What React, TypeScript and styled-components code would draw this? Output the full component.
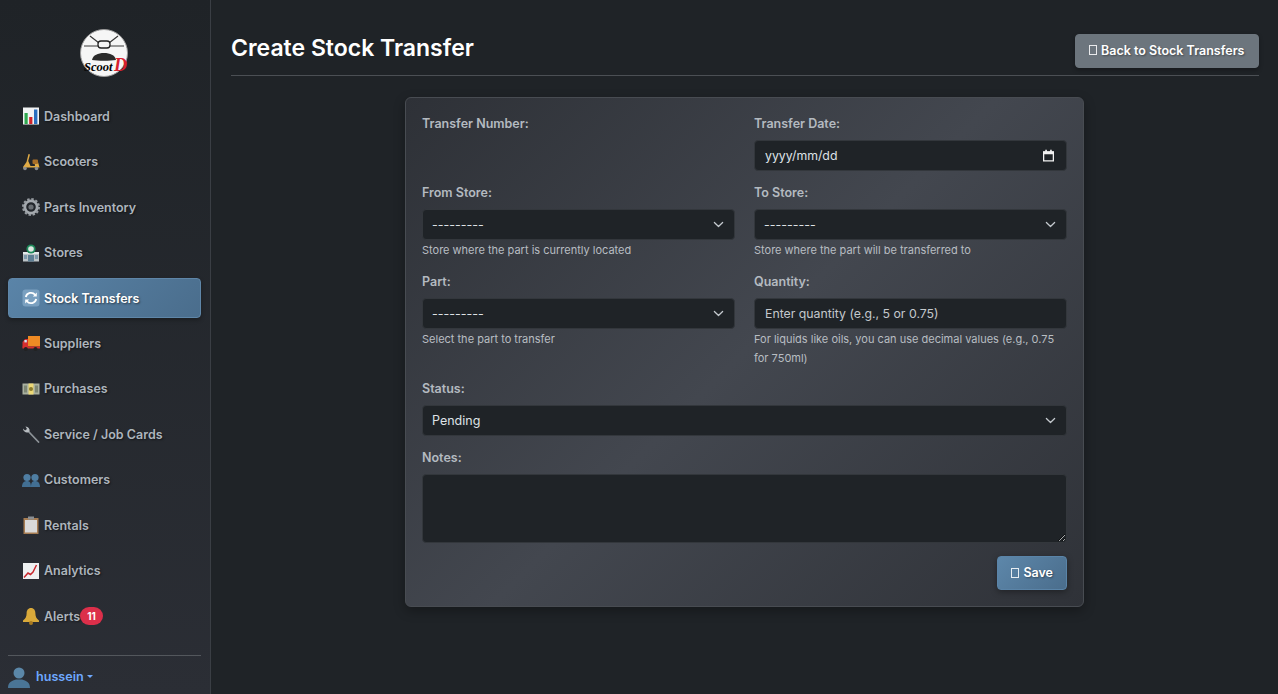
import React from 'react';
import styled, { createGlobalStyle } from 'styled-components';

const chevron = `url("data:image/svg+xml,%3csvg xmlns='http://www.w3.org/2000/svg' viewBox='0 0 16 16'%3e%3cpath fill='none' stroke='%23c4c9ce' stroke-linecap='round' stroke-linejoin='round' stroke-width='1.8' d='m2 5 6 6 6-6'/%3e%3c/svg%3e")`;
const calendar = `url("data:image/svg+xml,%3csvg xmlns='http://www.w3.org/2000/svg' viewBox='0 0 16 16'%3e%3cpath fill='none' stroke='%23f2f2f2' stroke-width='1.6' d='M2 3.5h12v11H2z'/%3e%3cpath fill='%23f2f2f2' d='M1.5 3h13v3.5h-13zM4 1h2v2.5H4zM10 1h2v2.5h-2z'/%3e%3c/svg%3e")`;

const GlobalStyle = createGlobalStyle`
    html, body {
        margin: 0;
        height: 100%;
        overflow: hidden;
        background: #1f2327;
        font-family: Inter, 'Noto Sans', sans-serif;
    }
    * {
        box-sizing: border-box;
    }
`;

const BarsIcon = () => (
    <svg viewBox="0 0 18 18" width="18" height="18">
        <rect x="1" y="0.5" width="16" height="17" fill="#f1f3f4" />
        <rect x="2.5" y="6" width="3.2" height="11" fill="#2fa84f" />
        <rect x="7.2" y="10" width="3.2" height="7" fill="#d0242b" />
        <rect x="12" y="2.5" width="3.4" height="14.5" fill="#2a6fc0" />
    </svg>
);

const ScooterIcon = () => (
    <svg viewBox="0 0 18 18" width="18" height="18">
        <path d="M6.5 1 8 1.500 6.200 8 8.500 13H13l-.5-3.500 3.500-.5 1.500 5.500H4.500L2 16l-1-2 3.500-5z" fill="#e0ab45" />
        <rect x="10.500" y="6.500" width="5.500" height="4.500" rx="1" fill="#a86f28" />
        <circle cx="3" cy="15.500" r="1.800" fill="#8a8d90" />
        <circle cx="14.500" cy="15.500" r="1.800" fill="#8a8d90" />
    </svg>
);

const GearIcon = () => (
    <svg viewBox="0 0 18 18" width="18" height="18">
        <circle cx="9" cy="9" r="6.200" fill="none" stroke="#a4a9ae" strokeWidth="2.800" />
        <circle cx="9" cy="9" r="8" fill="none" stroke="#979ca1" strokeWidth="2" strokeDasharray="2.400 1.800" />
        <circle cx="9" cy="9" r="2.600" fill="#6a6f74" />
    </svg>
);

const StoreIcon = () => (
    <svg viewBox="0 0 18 18" width="18" height="18">
        <rect x="1" y="8" width="16" height="9.500" fill="#bcc3c7" />
        <rect x="1" y="8" width="16" height="2" fill="#e4e8ea" />
        <rect x="6" y="11" width="6" height="6.500" fill="#5e7f94" />
        <rect x="2" y="11" width="3" height="4" fill="#7f9aab" />
        <rect x="13" y="11" width="3" height="4" fill="#7f9aab" />
        <circle cx="9" cy="5" r="4.600" fill="#1f8a5b" />
        <circle cx="9" cy="5" r="2.800" fill="#dfe7e3" />
    </svg>
);

const SyncIcon = () => (
    <svg viewBox="0 0 18 18" width="18" height="18">
        <rect x="0.500" y="0.500" width="17" height="17" rx="3" fill="#7aa0c0" />
        <path d="M3.800 8a5.300 5.300 0 0 1 9.300-2.200M14.200 10a5.300 5.300 0 0 1-9.300 2.200" fill="none" stroke="#fff" strokeWidth="1.800" />
        <path d="M14.800 3.400v4h-4zM3.200 14.600v-4h4z" fill="#fff" />
    </svg>
);

const TruckIcon = () => (
    <svg viewBox="0 0 18 18" width="18" height="18">
        <rect x="6" y="2" width="12" height="10.500" fill="#ee8a24" />
        <path d="M0.500 8 3 5h3v8.500H0.500z" fill="#d62f2f" />
        <rect x="0.500" y="12.500" width="17.500" height="2" fill="#d62f2f" />
        <rect x="2.400" y="6" width="2.400" height="2.400" fill="#cfe6f5" />
        <circle cx="3.800" cy="15" r="2" fill="#222" />
        <circle cx="13.500" cy="15" r="2" fill="#222" />
    </svg>
);

const MoneyIcon = () => (
    <svg viewBox="0 0 18 18" width="18" height="18">
        <rect x="0.500" y="3.500" width="17" height="11" fill="#a9b09f" />
        <rect x="6.500" y="3.500" width="5" height="11" fill="#ecd876" />
        <circle cx="9" cy="9" r="2" fill="#8a7a2c" />
        <rect x="2" y="5.500" width="3" height="7" fill="#7d8674" />
        <rect x="13" y="5.500" width="3" height="7" fill="#7d8674" />
    </svg>
);

const WrenchIcon = () => (
    <svg viewBox="0 0 18 18" width="18" height="18">
        <path d="M16.500 17 6 6" stroke="#8d9398" strokeWidth="1.800" strokeLinecap="round" />
        <path d="M1 3.500 3 5.500 5 4 3.500 1.500A4 4 0 0 1 7.500 6.500L5.800 7.400A4 4 0 0 1 1 3.500z" fill="#b7bcc0" />
    </svg>
);

const PeopleIcon = () => (
    <svg viewBox="0 0 18 18" width="18" height="18">
        <circle cx="5" cy="6.500" r="3.600" fill="#4f7ea3" />
        <circle cx="13" cy="6.500" r="3.600" fill="#4f7ea3" />
        <path d="M0 16c0-4 2-6 5-6s4 2 4 6zM9 16c0-4 1-6 4-6s5 2 5 6z" fill="#426f93" />
    </svg>
);

const ClipboardIcon = () => (
    <svg viewBox="0 0 18 18" width="18" height="18">
        <rect x="1.500" y="2" width="15" height="16" fill="#a67c52" />
        <rect x="3" y="4" width="12" height="12.500" fill="#d9d9d9" />
        <rect x="6" y="0.500" width="6" height="3" fill="#8b8f93" />
    </svg>
);

const TrendIcon = () => (
    <svg viewBox="0 0 18 18" width="18" height="18">
        <rect x="1" y="1" width="16" height="16" fill="#eef0f1" />
        <path d="M2 15.500 6 11l2.500 1.500L11 10l3.500-7" fill="none" stroke="#c8282e" strokeWidth="1.500" />
    </svg>
);

const BellIcon = () => (
    <svg viewBox="0 0 18 18" width="18" height="18">
        <path d="M9 1c3 0 4.400 2.400 4.400 5.500 0 3 1 5 3.600 7v1.500H1v-1.500c2.600-2 3.600-4 3.600-7C4.600 3.400 6 1 9 1z" fill="#d9a93a" />
        <circle cx="9" cy="16" r="2" fill="#a87a22" />
    </svg>
);

const navItems = [
    { label: 'Dashboard', icon: <BarsIcon /> },
    { label: 'Scooters', icon: <ScooterIcon /> },
    { label: 'Parts Inventory', icon: <GearIcon /> },
    { label: 'Stores', icon: <StoreIcon /> },
    { label: 'Stock Transfers', icon: <SyncIcon />, active: true },
    { label: 'Suppliers', icon: <TruckIcon /> },
    { label: 'Purchases', icon: <MoneyIcon /> },
    { label: 'Service / Job Cards', icon: <WrenchIcon /> },
    { label: 'Customers', icon: <PeopleIcon /> },
    { label: 'Rentals', icon: <ClipboardIcon /> },
    { label: 'Analytics', icon: <TrendIcon /> },
    { label: 'Alerts', icon: <BellIcon />, badge: '11' },
];

const App: React.FunctionComponent = () => {
    return (
        <Page>
            <GlobalStyle />
            <Sidebar>
                <LogoRow>
                    <svg viewBox="0 0 48 48" width="48" height="48">
                        <circle cx="24" cy="24" r="23.500" fill="#f6f6f6" stroke="#9a9a9a" strokeWidth="1" />
                        <path d="M4 17h15M29 17h15M10 7l9 7M38 7l-9 7" stroke="#3a3a3a" strokeWidth="1.200" />
                        <rect x="18" y="12" width="12" height="7" rx="3" fill="#f6f6f6" stroke="#222" strokeWidth="1.300" />
                        <path d="M12 31c1-5 6-7 12-7s11 2 12 7c-6 1-18 1-24 0z" fill="#2b2b2b" />
                        <text x="4" y="42" fontFamily="'Liberation Serif', serif" fontStyle="italic" fontWeight="700" fontSize="12.500" fill="#000">Scoot</text>
                        <text x="34" y="42" fontFamily="'Liberation Serif', serif" fontStyle="italic" fontWeight="700" fontSize="18" fill="#d8202f">D</text>
                    </svg>
                </LogoRow>
                <Nav>
                    {navItems.map(item => (
                        <NavItem key={item.label} $active={item.active}>
                            <NavIcon>{item.icon}</NavIcon>
                            {item.label}
                            {item.badge && <Badge>{item.badge}</Badge>}
                        </NavItem>
                    ))}
                </Nav>
                <UserRow>
                    <svg viewBox="0 0 22 22" width="22" height="22">
                        <circle cx="11" cy="7" r="5.500" fill="#5b87a8" />
                        <path d="M0 22c0-6 4-7 8-8.500h6c4 1.500 8 2.500 8 8.500z" fill="#4a7596" />
                    </svg>
                    <UserName>hussein</UserName>
                    <Caret />
                </UserRow>
            </Sidebar>
            <Main>
                <Header>
                    <Title>Create Stock Transfer</Title>
                    <BackButton>
                        <Tofu />
                        Back to Stock Transfers
                    </BackButton>
                </Header>
                <Card>
                    <FieldRow>
                        <Field>
                            <Label>Transfer Number:</Label>
                        </Field>
                        <Field>
                            <Label>Transfer Date:</Label>
                            <DateInput readOnly value="yyyy/mm/dd" />
                        </Field>
                    </FieldRow>
                    <FieldRow>
                        <Field>
                            <Label>From Store:</Label>
                            <Select>
                                <option>---------</option>
                            </Select>
                            <Help>Store where the part is currently located</Help>
                        </Field>
                        <Field>
                            <Label>To Store:</Label>
                            <Select>
                                <option>---------</option>
                            </Select>
                            <Help>Store where the part will be transferred to</Help>
                        </Field>
                    </FieldRow>
                    <FieldRow>
                        <Field>
                            <Label>Part:</Label>
                            <Select>
                                <option>---------</option>
                            </Select>
                            <Help>Select the part to transfer</Help>
                        </Field>
                        <Field>
                            <Label>Quantity:</Label>
                            <TextInput placeholder="Enter quantity (e.g., 5 or 0.75)" />
                            <Help>For liquids like oils, you can use decimal values (e.g., 0.75 for 750ml)</Help>
                        </Field>
                    </FieldRow>
                    <Field>
                        <Label>Status:</Label>
                        <Select>
                            <option>Pending</option>
                        </Select>
                    </Field>
                    <Field>
                        <Label>Notes:</Label>
                        <TextArea />
                    </Field>
                    <Actions>
                        <SaveButton>
                            <Tofu />
                            Save
                        </SaveButton>
                    </Actions>
                </Card>
            </Main>
        </Page>
    );
};

export default App;

const Page = styled.div`
    display: flex;
    height: 694px;
    overflow: hidden;
    background: #1f2327;
`;

const Sidebar = styled.aside`
    width: 211px;
    flex-shrink: 0;
    display: flex;
    flex-direction: column;
    padding: 29px 9px 0 8px;
    border-right: 1px solid #3a3e44;
    background: linear-gradient(180deg, #1f2327 0%, #2b2e35 100%);
`;

const LogoRow = styled.div`
    display: flex;
    flex-shrink: 0;
    justify-content: center;
    height: 48px;
    margin-bottom: 19.3px;
    padding-right: 1px;

    svg {
        display: block;
    }
`;

const Nav = styled.nav`
    display: flex;
    flex-shrink: 0;
    flex-direction: column;
    gap: 5.45px;
`;

const NavItem = styled.a<{ $active?: boolean }>`
    display: flex;
    align-items: center;
    height: 40px;
    padding-left: 13px;
    border-radius: 4px;
    font-size: 12.5px;
    font-weight: 600;
    color: ${props => (props.$active ? '#ffffff' : '#adb5bd')};
    text-shadow: 1px 1px 2px rgba(0, 0, 0, 0.5);
    border: 1px solid ${props => (props.$active ? '#5f86a8' : 'transparent')};
    background: ${props => (props.$active ? 'linear-gradient(135deg, #5a84a8, #4a6d8c)' : 'transparent')};
    box-shadow: ${props => (props.$active ? '0 2px 4px rgba(0, 0, 0, 0.3)' : 'none')};
`;

const NavIcon = styled.span`
    display: flex;
    width: 18px;
    margin-right: 4px;
`;

const Badge = styled.span`
    display: inline-flex;
    align-items: center;
    justify-content: center;
    width: 23px;
    height: 18px;
    border-radius: 9px;
    background: #dc2f4a;
    color: #fff;
    font-size: 10px;
    font-weight: 700;
    text-shadow: none;
`;

const UserRow = styled.div`
    display: flex;
    flex-shrink: 0;
    align-items: center;
    margin-top: 18.75px;
    height: 43px;
    border-top: 1px solid #53575c;
    gap: 6px;
`;

const UserName = styled.span`
    font-size: 12.6px;
    font-weight: 600;
    color: #6ea8fe;
`;

const Caret = styled.span`
    width: 0;
    height: 0;
    margin-left: -3px;
    border-left: 3px solid transparent;
    border-right: 3px solid transparent;
    border-top: 3px solid #6ea8fe;
`;

const Main = styled.main`
    flex: 1;
    min-width: 0;
    padding: 0 19px 0 20px;
`;

const Header = styled.header`
    display: flex;
    justify-content: space-between;
    align-items: flex-end;
    height: 76px;
    padding-bottom: 7px;
    border-bottom: 1px solid #4b4f54;
    margin-bottom: 21px;
`;

const Title = styled.h1`
    margin: 0 0 6px;
    font-size: 23px;
    line-height: 28px;
    font-weight: 600;
    color: #ffffff;
`;

const Tofu = styled.span`
    display: inline-block;
    width: 8px;
    height: 10px;
    margin-right: 4px;
    border: 1px solid currentColor;
    opacity: 0.85;
`;

const BackButton = styled.button`
    display: flex;
    align-items: center;
    height: 34px;
    width: 184px;
    padding: 0 13px 2px;
    border: 1px solid #6c757d;
    border-radius: 4px;
    background: #6c757d;
    color: #fff;
    font-family: inherit;
    font-size: 12.5px;
    font-weight: 600;
    text-shadow: 1px 1px 2px rgba(0, 0, 0, 0.4);
    box-shadow: 0 2px 4px rgba(0, 0, 0, 0.3);
`;

const Card = styled.form`
    width: 679px;
    margin-left: 174px;
    padding: 16px;
    border: 1px solid #484c52;
    border-radius: 6px;
    background: linear-gradient(135deg, #2e3137 0%, #43474f 50%, #2f3238 100%);
    box-shadow: 0 4px 12px rgba(0, 0, 0, 0.3);
`;

const FieldRow = styled.div`
    display: grid;
    grid-template-columns: 313px 313px;
    column-gap: 19px;
`;

const Field = styled.div`
    margin-bottom: 12px;
`;

const Label = styled.label`
    display: block;
    height: 19.5px;
    margin-bottom: 6.5px;
    font-size: 12.5px;
    font-weight: 600;
    line-height: 19.5px;
    color: #b4bac0;
`;

const controlBase = `
    display: block;
    width: 100%;
    border: 1px solid #33373c;
    border-radius: 4px;
    background-color: #1f2327;
    color: #dee2e6;
    font-family: inherit;
    font-size: 12.5px;
    outline: none;
`;

const TextInput = styled.input`
    ${controlBase}
    height: 31px;
    padding: 0 10px;
    font-size: 12.3px;

    &::placeholder {
        color: #c4c8cc;
        opacity: 1;
    }
`;

const DateInput = styled(TextInput)`
    background-image: ${calendar};
    background-repeat: no-repeat;
    background-position: right 11px center;
    background-size: 13px 13px;
`;

const Select = styled.select`
    ${controlBase}
    height: 31px;
    padding: 0 10px 0 9px;
    appearance: none;
    background-image: ${chevron};
    background-repeat: no-repeat;
    background-position: right 10px center;
    background-size: 11px 11px;
`;

const Help = styled.div`
    padding-top: 1px;
    margin-bottom: -0.5px;
    font-size: 11px;
    line-height: 19px;
    color: #b8bdc2;
`;

const TextArea = styled.textarea`
    ${controlBase}
    height: 69px;
    padding: 6px 10px;
    margin-bottom: 13px;
`;

const Actions = styled.div`
    display: flex;
    justify-content: flex-end;
`;

const SaveButton = styled.button`
    display: flex;
    align-items: center;
    height: 34px;
    padding: 0 13px 1px;
    border: 1px solid #5a84a8;
    border-radius: 4px;
    background: linear-gradient(135deg, #5d87aa, #4a6d8c);
    color: #fff;
    font-family: inherit;
    font-size: 12.5px;
    font-weight: 600;
    text-shadow: 1px 1px 2px rgba(0, 0, 0, 0.4);
    box-shadow: 0 2px 6px rgba(0, 0, 0, 0.35);
`;
